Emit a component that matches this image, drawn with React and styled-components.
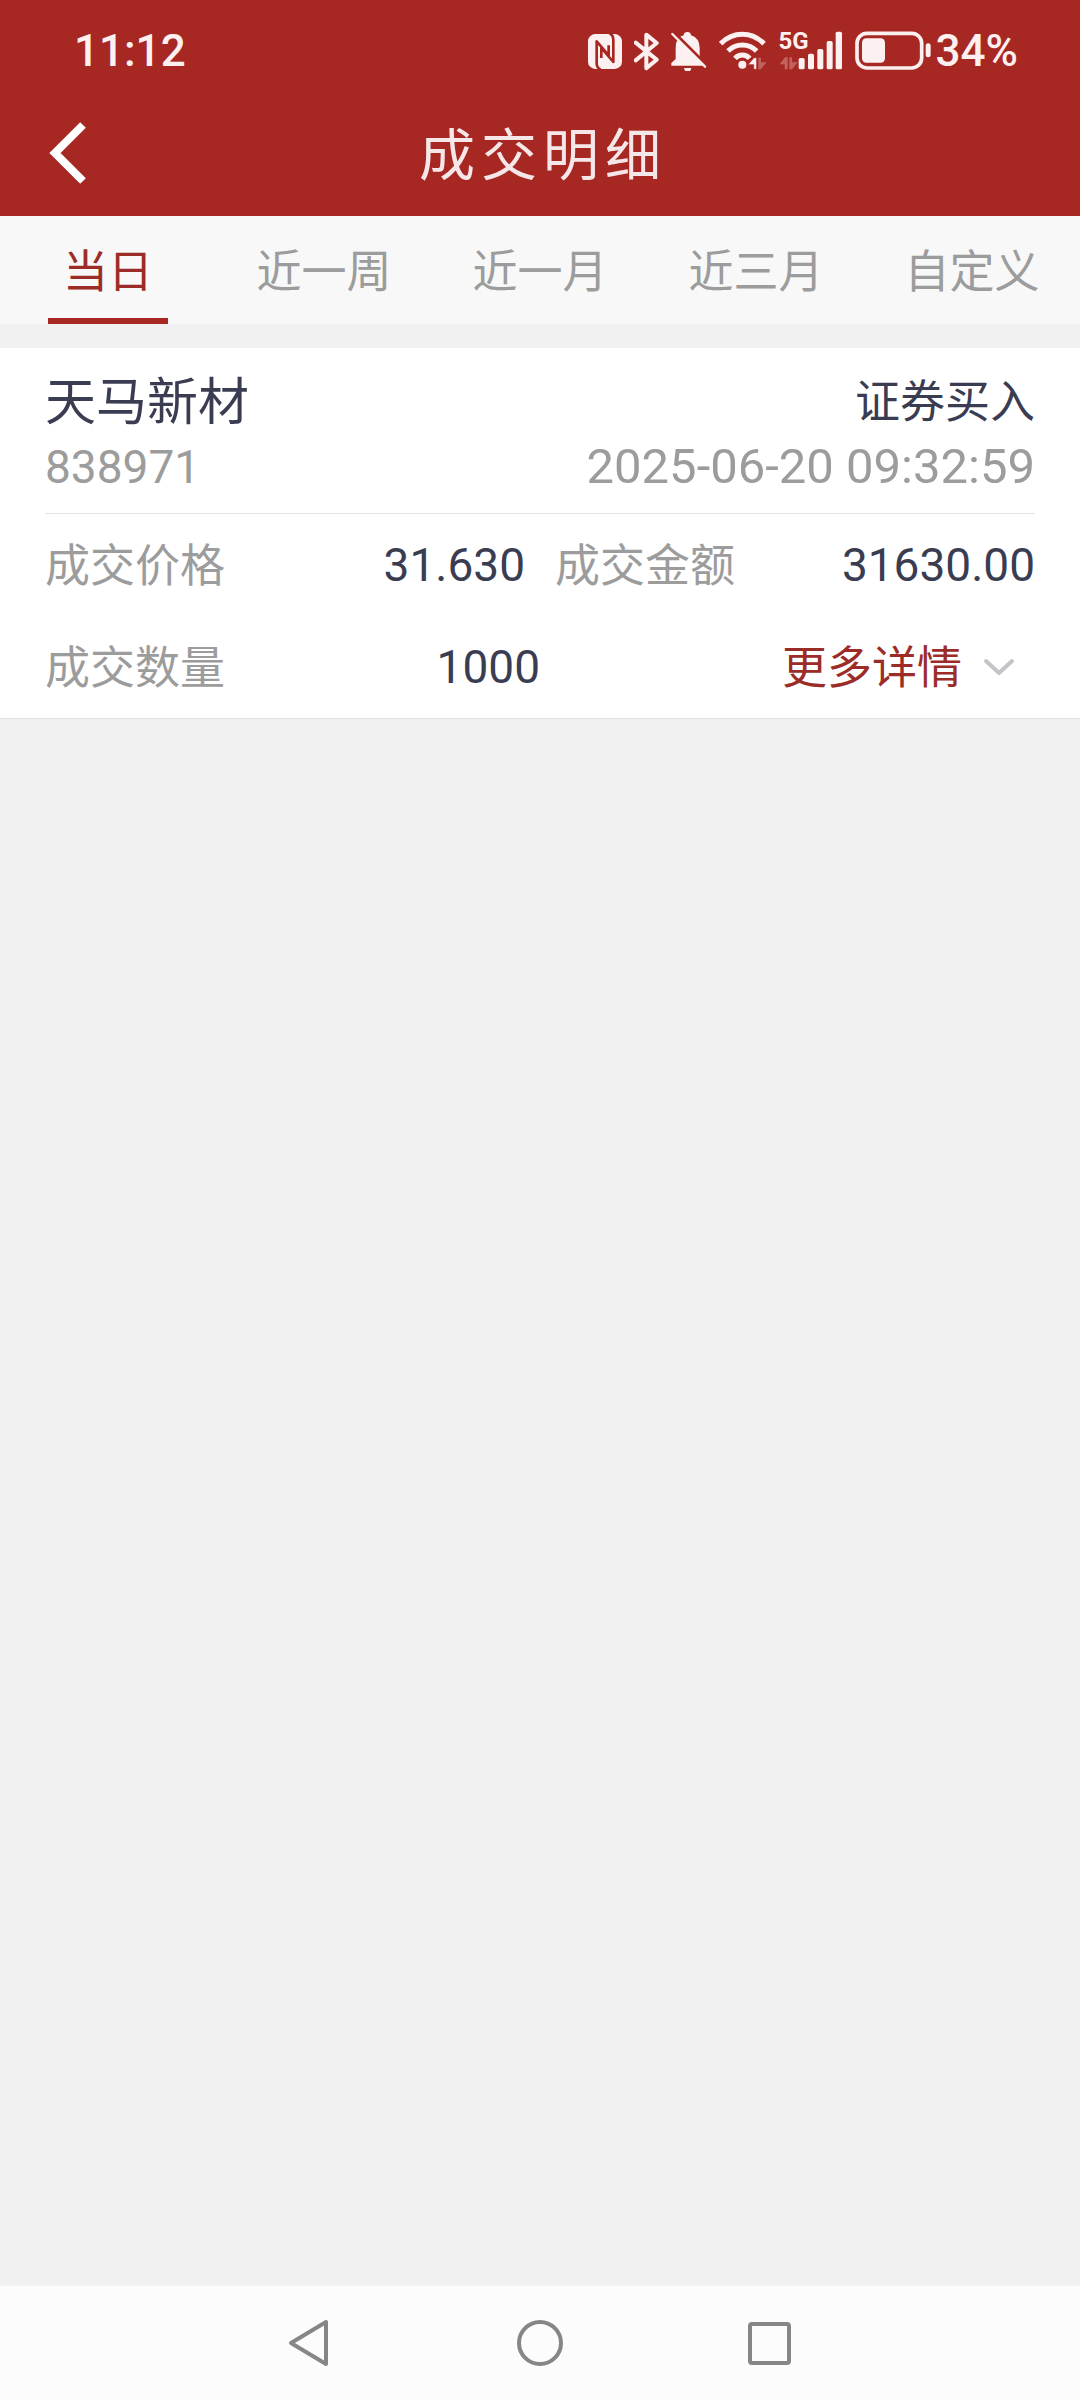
import React from "react";
import styled, { createGlobalStyle } from "styled-components";

const red = "#a72722";
const redText = "#9c2c28";
const ink = "#3a3d52";
const grey = "#9c9c9c";
const pale = "#fdf0f0";

const GlobalStyle = createGlobalStyle`
  * { box-sizing: border-box; }
  html, body { margin: 0; background: #f1f1f1; }
  body {
    font-family: Roboto, "Noto Sans CJK SC", sans-serif;
    font-size: 45px;
    color: ${ink};
  }
  button {
    margin: 0;
    padding: 0;
    border: 0;
    background: none;
    font: inherit;
    color: inherit;
    cursor: pointer;
  }
  svg { display: block; flex: none; }
`;

const Screen = styled.div`
  display: flex;
  flex-direction: column;
  min-height: 100vh;
`;

const Header = styled.header`
  background: ${red};
  padding-bottom: 12px;
`;

const StatusBar = styled.div`
  display: flex;
  align-items: center;
  justify-content: space-between;
  height: 102px;
  padding: 0 62px 0 74px;
  color: ${pale};
  font-size: 44px;
  font-weight: 500;
`;

const StatusIcons = styled.div`
  display: flex;
  align-items: center;
  gap: 12px;
`;

const Battery = styled.div`
  display: flex;
  align-items: center;
  gap: 4px;
`;

const Cellular = styled.div`
  position: relative;
`;

const NetworkType = styled.span`
  position: absolute;
  top: -2px;
  left: 0;
  font-size: 24px;
  font-weight: 700;
  line-height: 24px;
`;

const TitleBar = styled.div`
  display: grid;
  grid-template-columns: 135px 1fr 135px;
  align-items: center;
  height: 102px;
`;

const BackButton = styled.button`
  display: flex;
  align-items: center;
  height: 100%;
  padding-left: 45px;
`;

const Title = styled.h1`
  margin: 0;
  padding: 6px 0 0 6px;
  text-align: center;
  color: #f5e6e8;
  font-size: 56px;
  font-weight: 400;
  line-height: 72px;
  letter-spacing: 6px;
`;

const Tabs = styled.nav`
  display: grid;
  grid-template-columns: repeat(5, 1fr);
  height: 108px;
  background: #f8f8f8;
`;

const Tab = styled.button`
  display: flex;
  flex-direction: column;
  align-items: center;
  padding-top: 12px;
  color: ${(p) => (p.$active ? redText : grey)};
  line-height: 90px;

  &::after {
    content: "";
    width: 120px;
    height: 6px;
    background: ${(p) => (p.$active ? red : "transparent")};
  }
`;

const Card = styled.article`
  margin-top: 24px;
  padding: 0 45px;
  background: #fff;
  border-bottom: 1px solid #e2e2e2;
`;

const CardHead = styled.div`
  display: grid;
  row-gap: 4px;
  padding: 25px 0 16px;
  border-bottom: 1px solid #e4e4e4;
`;

const Line = styled.div`
  display: flex;
  align-items: center;
  justify-content: space-between;
  line-height: 60px;
  color: ${(p) => (p.$muted ? grey : ink)};
`;

const StockName = styled.h2`
  margin: 0;
  font-size: 51px;
  font-weight: 400;
`;

const Num = styled.span`
  font-size: 46px;
`;

const Time = styled.time`
  font-size: 49px;
`;

const Details = styled.div`
  display: grid;
  grid-template-columns: 1fr 1fr;
  column-gap: ${(p) => p.$gap}px;
  height: 102px;
  align-items: center;
`;

const Field = styled.div`
  display: flex;
  align-items: center;
  justify-content: space-between;
  line-height: 60px;
`;

const Label = styled.span`
  padding-top: 4px;
  color: ${(p) => (p.$accent ? redText : grey)};
`;

const MoreButton = styled.button`
  display: flex;
  align-items: center;
  justify-self: end;
  gap: 21px;
  padding-right: 20px;
  line-height: 60px;
`;

const SystemNav = styled.footer`
  display: flex;
  justify-content: center;
  margin-top: auto;
  height: 114px;
  background: #fcfcfc;
`;

const SystemButton = styled.button`
  display: flex;
  align-items: center;
  justify-content: center;
  width: 230px;
`;

const NfcIcon = () => (
  <svg width="34" height="40" viewBox="84 63 102 120" aria-hidden="true">
    <rect x="84" y="72" width="102" height="105" rx="22" fill={pale} />
    <path
      d="M122 179Q110 174 110 160V94L146 136V106"
      fill="none"
      stroke={red}
      strokeWidth="8"
      strokeLinejoin="round"
    />
    <path
      d="M148 70Q160 75 160 90V156L124 114V144"
      fill="none"
      stroke={red}
      strokeWidth="8"
      strokeLinejoin="round"
    />
  </svg>
);

const BluetoothIcon = () => (
  <svg width="25" height="40" viewBox="221 63 75 120" aria-hidden="true">
    <path
      d="M226 98L289 149L258 175V74L289 99L226 151"
      fill="none"
      stroke={pale}
      strokeWidth="12"
      strokeLinejoin="round"
      strokeLinecap="round"
    />
  </svg>
);

const MutedBellIcon = () => (
  <svg width="36" height="40" viewBox="332 63 108 120" aria-hidden="true">
    <path
      d="M333 167V159L346 147V113Q346 82 370 76Q371 66 381 66Q391 66 392 76Q418 84 418 114V146L430 159V167Z"
      fill={pale}
    />
    <path d="M371 174H393Q391 186 382 186Q373 186 371 174Z" fill={pale} />
    <path d="M340 66L443 169" stroke={red} strokeWidth="9" />
    <path d="M336 72L434 170" stroke={pale} strokeWidth="7" strokeLinecap="round" />
  </svg>
);

const WifiIcon = () => (
  <svg width="48" height="40" viewBox="479 63 144 120" aria-hidden="true">
    <g fill="none" stroke={pale} strokeWidth="15">
      <path d="M484 101Q512 73 549 73T614 101" />
      <path d="M506 123Q524 105 549 105T592 123" />
      <path d="M527 145Q536 135 549 135T571 145" />
    </g>
    <circle cx="549" cy="164" r="12" fill={pale} />
    <path d="M566 164L584 143H592V178H583V164Z" fill={pale} stroke={red} strokeWidth="2" />
    <path d="M597 143H605V157H622L604 178H597Z" fill={pale} opacity="0.3" />
  </svg>
);

const SignalIcon = () => (
  <svg width="64" height="40" viewBox="650 63 192 120" aria-hidden="true">
    <g fill={pale}>
      <path d="M652 163L668 142H676V178H667V163Z" opacity="0.3" />
      <path d="M681 142H689V157H706L689 178H681Z" opacity="0.3" />
      <rect x="709" y="144" width="18" height="34" rx="5" />
      <rect x="737" y="131" width="18" height="47" rx="5" />
      <rect x="765" y="117" width="18" height="61" rx="5" />
      <rect x="793" y="93" width="18" height="85" rx="5" />
      <rect x="820" y="65" width="19" height="113" rx="5" />
    </g>
  </svg>
);

const BatteryIcon = () => (
  <svg width="77" height="40" viewBox="162 63 231 120" aria-hidden="true">
    <rect x="168" y="70" width="194" height="104" rx="30" fill="none" stroke={pale} strokeWidth="11" />
    <rect x="183" y="85" width="69" height="73" rx="13" fill={pale} />
    <rect x="374" y="100" width="15" height="42" rx="7" fill={pale} />
  </svg>
);

const BackIcon = () => (
  <svg width="45" height="66" viewBox="45 120 45 66" aria-hidden="true">
    <path d="M83 125L55 153L83 181" fill="none" stroke="#fff" strokeWidth="8" />
  </svg>
);

const ChevronDownIcon = () => (
  <svg width="32" height="18" viewBox="0 0 32 18" aria-hidden="true">
    <path
      d="M3 3L16 15L29 3"
      fill="none"
      stroke="#c3c4ca"
      strokeWidth="4"
      strokeLinecap="round"
      strokeLinejoin="round"
    />
  </svg>
);

const systemIcons = {
  返回: <path d="M6 25L41 4V46Z" />,
  主屏幕: <circle cx="25" cy="25" r="21" />,
  最近任务: <rect x="5" y="6" width="39" height="39" rx="2" />,
};

const tabs = ["当日", "近一周", "近一月", "近三月", "自定义"];

export default function App() {
  const [active, setActive] = React.useState(tabs[0]);

  return (
    <Screen>
      <GlobalStyle />
      <Header>
        <StatusBar>
          <span>11:12</span>
          <StatusIcons>
            <NfcIcon />
            <BluetoothIcon />
            <MutedBellIcon />
            <WifiIcon />
            <Cellular>
              <SignalIcon />
              <NetworkType>5G</NetworkType>
            </Cellular>
            <Battery>
              <BatteryIcon />
              <span>34%</span>
            </Battery>
          </StatusIcons>
        </StatusBar>
        <TitleBar>
          <BackButton aria-label="返回">
            <BackIcon />
          </BackButton>
          <Title>成交明细</Title>
        </TitleBar>
      </Header>

      <Tabs>
        {tabs.map((name) => (
          <Tab key={name} $active={name === active} onClick={() => setActive(name)}>
            {name}
          </Tab>
        ))}
      </Tabs>

      <main>
        <Card>
          <CardHead>
            <Line>
              <StockName>天马新材</StockName>
              <span>证券买入</span>
            </Line>
            <Line $muted>
              <Num>838971</Num>
              <Time dateTime="2025-06-20T09:32:59">2025-06-20 09:32:59</Time>
            </Line>
          </CardHead>
          <Details $gap={30}>
            <Field>
              <Label>成交价格</Label>
              <Num>31.630</Num>
            </Field>
            <Field>
              <Label>成交金额</Label>
              <Num>31630.00</Num>
            </Field>
          </Details>
          <Details $gap={0}>
            <Field>
              <Label>成交数量</Label>
              <Num>1000</Num>
            </Field>
            <MoreButton>
              <Label as="span" $accent>更多详情</Label>
              <ChevronDownIcon />
            </MoreButton>
          </Details>
        </Card>
      </main>

      <SystemNav>
        {Object.entries(systemIcons).map(([label, shape]) => (
          <SystemButton key={label} aria-label={label}>
            <svg
              width="50"
              height="50"
              viewBox="0 0 50 50"
              fill="none"
              stroke="#868686"
              strokeWidth="4"
              strokeLinejoin="round"
              aria-hidden="true"
            >
              {shape}
            </svg>
          </SystemButton>
        ))}
      </SystemNav>
    </Screen>
  );
}
